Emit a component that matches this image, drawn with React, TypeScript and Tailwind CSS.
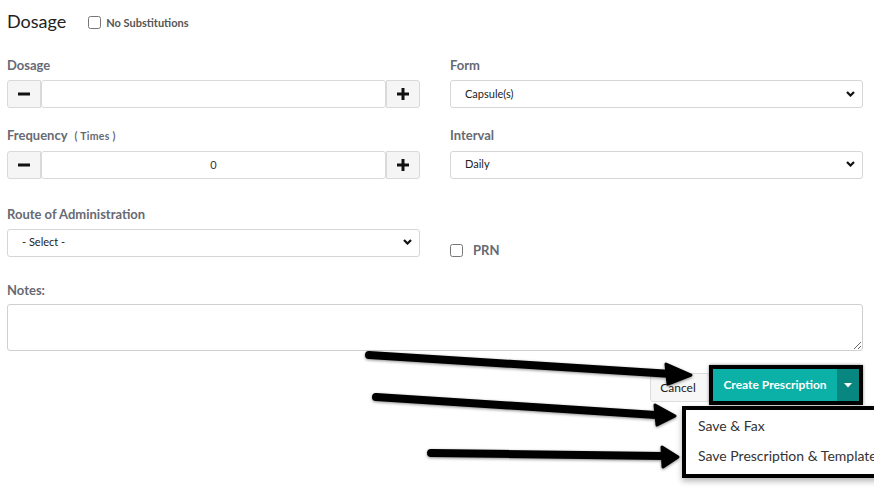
import React from "react";

function Chevron() {
  return (
    <svg
      className="pointer-events-none absolute right-[8px] top-[11px]"
      width="9"
      height="6"
      viewBox="0 0 9 6"
    >
      <polyline points="1,1 4.5,4.5 8,1" fill="none" stroke="#111" strokeWidth="2.2" />
    </svg>
  );
}

function Select({ value }: { value: string }) {
  return (
    <div className="relative">
      <select
        defaultValue={value}
        className="h-[28px] w-full appearance-none rounded-[3px] border border-[#d6d6d6] bg-white pl-[14px] text-[11px] text-[#222] outline-none"
      >
        <option>{value}</option>
      </select>
      <Chevron />
    </div>
  );
}

function Stepper({ value }: { value: string }) {
  return (
    <div className="flex h-[28px]">
      <button className="flex w-[34px] items-center justify-center rounded-l-[3px] border border-[#d9d9d9] bg-[#f5f5f5]">
        <svg width="12" height="4" viewBox="0 0 12 4">
          <rect x="0" y="0.5" width="12" height="3" fill="#111" />
        </svg>
      </button>
      <input
        defaultValue={value}
        className="min-w-0 flex-1 rounded-[3px] border border-[#d9d9d9] bg-white text-center text-[11px] text-[#333] outline-none"
      />
      <button className="flex w-[34px] items-center justify-center rounded-r-[3px] border border-[#d9d9d9] bg-[#f5f5f5]">
        <svg width="12" height="12" viewBox="0 0 12 12">
          <rect x="0" y="4.5" width="12" height="3" fill="#111" />
          <rect x="4.5" y="0" width="3" height="12" fill="#111" />
        </svg>
      </button>
    </div>
  );
}

function Label({ children }: { children: React.ReactNode }) {
  return <div className="text-[13px] font-bold leading-[20px] text-[#676a73]">{children}</div>;
}

export default function App() {
  return (
    <div className="relative h-[490px] w-[874px] overflow-hidden bg-white font-['Lato',sans-serif] text-[#333]">
      <div className="pl-[7px] pr-[11px] pt-[9px]">
        <div className="flex h-[24px] items-center">
          <h1 className="text-[18px] leading-[24px] text-[#222]">Dosage</h1>
          <input type="checkbox" className="ml-[22px] mt-[2px] h-[13px] w-[13px]" />
          <span className="ml-[5px] mt-[4px] text-[11px] font-bold text-[#555]">No Substitutions</span>
        </div>

        <div className="mt-[22px] grid grid-cols-2 gap-x-[30px]">
          <div>
            <Label>Dosage</Label>
            <div className="mt-[5px]">
              <Stepper value="" />
            </div>
          </div>
          <div>
            <Label>Form</Label>
            <div className="mt-[5px]">
              <Select value="Capsule(s)" />
            </div>
          </div>
        </div>

        <div className="mt-[17px] grid grid-cols-2 gap-x-[30px]">
          <div>
            <Label>
              Frequency
              <span className="ml-[7px] text-[10.5px] font-bold tracking-[0.3px]">( Times )</span>
            </Label>
            <div className="mt-[5px]">
              <Stepper value="0" />
            </div>
          </div>
          <div>
            <Label>Interval</Label>
            <div className="mt-[5px]">
              <Select value="Daily" />
            </div>
          </div>
        </div>

        <div className="mt-[25px] grid grid-cols-2 gap-x-[30px]">
          <div>
            <Label>Route of Administration</Label>
            <div className="mt-[4px]">
              <Select value="- Select -" />
            </div>
          </div>
          <div className="flex items-center pt-[38px]">
            <input type="checkbox" className="h-[13px] w-[13px]" />
            <span className="ml-[10px] text-[13px] font-bold leading-[16px] text-[#676a73]">PRN</span>
          </div>
        </div>

        <div className="mt-[22px]">
          <Label>Notes:</Label>
          <textarea className="mt-[4px] block h-[47px] w-full rounded-[3px] border border-[#d0d0d0] bg-white outline-none" />
        </div>

        <div className="mt-[14px] flex justify-end">
          <button className="-mr-[1px] mt-[8px] h-[29px] w-[60px] rounded-[3px] border border-[#dcdcdc] bg-[#f7f7f7] pr-[4px] text-[12px] text-[#222]">
            Cancel
          </button>
          <div className="relative flex h-[40px] border-4 border-black shadow-[0_0_3px_rgba(0,0,0,0.45)]">
            <div className="flex w-[124px] items-center justify-center bg-[#0bb0a6] text-[12px] font-bold text-white">
              Create Prescription
            </div>
            <div className="flex w-[22px] items-center justify-center bg-[#07877f]">
              <svg width="8" height="5" viewBox="0 0 8 5">
                <polygon points="0,0 8,0 4,4.5" fill="#fff" />
              </svg>
            </div>
            <div className="absolute left-[-31px] top-[37px] h-[72px] w-[220px] border-4 border-black bg-white pt-[1px] shadow-[0_3px_6px_rgba(0,0,0,0.3)]">
              <div className="pl-[12px] text-[14px] leading-[30px] text-[#333]">Save &amp; Fax</div>
              <div className="whitespace-nowrap pl-[12px] text-[14px] leading-[30px] text-[#333]">
                Save Prescription &amp; Template
              </div>
            </div>
          </div>
        </div>
      </div>

      <svg className="pointer-events-none absolute left-0 top-0" width="874" height="490">
        <defs>
          <filter id="glow" x="-10%" y="-50%" width="120%" height="200%">
            <feDropShadow dx="0" dy="1" stdDeviation="1.5" floodColor="#000" floodOpacity="0.45" />
          </filter>
        </defs>
        <g filter="url(#glow)" fill="#000" stroke="#000" strokeLinecap="round" strokeLinejoin="round">
          <line x1="369" y1="355" x2="672" y2="374" strokeWidth="8" />
          <polygon points="666,364 691,375 668,384" strokeWidth="3" />
          <line x1="376" y1="397" x2="656" y2="415" strokeWidth="8" />
          <polygon points="655,405 675,416 657,425" strokeWidth="3" />
          <line x1="431" y1="453" x2="664" y2="456" strokeWidth="8" />
          <polygon points="662,447 678,457 663,467" strokeWidth="3" />
        </g>
      </svg>
    </div>
  );
}
